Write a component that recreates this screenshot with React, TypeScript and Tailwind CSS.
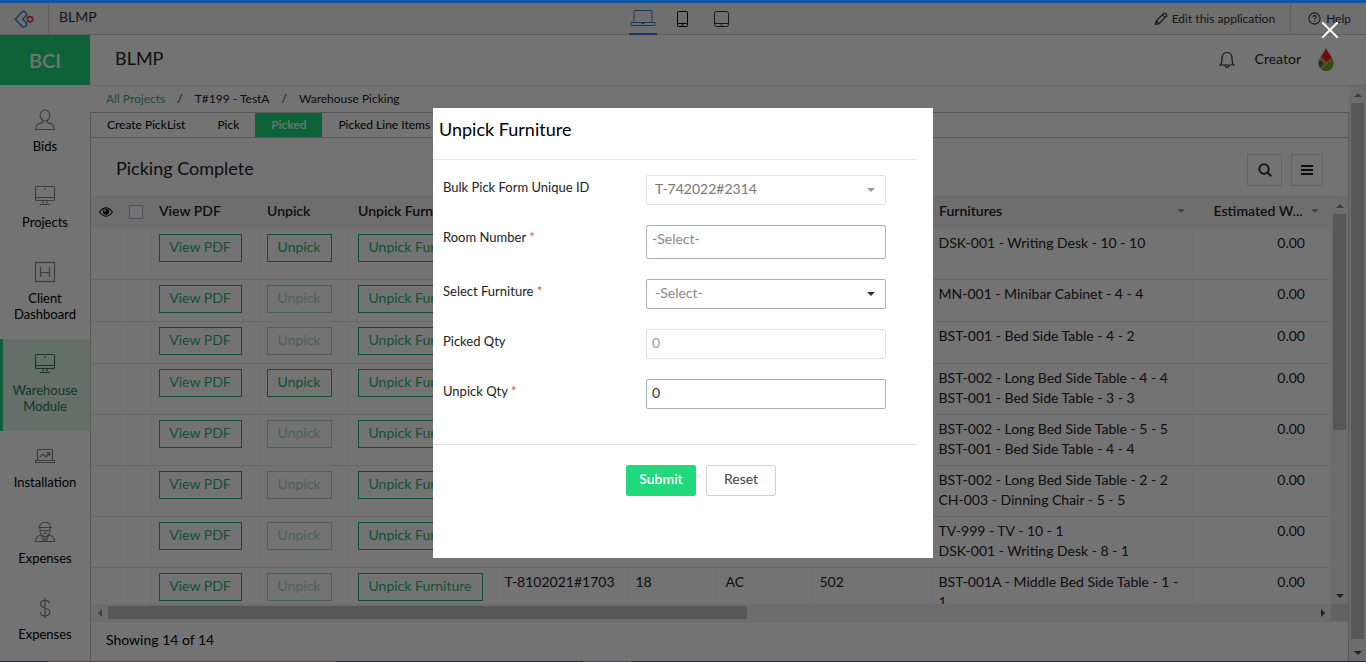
import type { ReactNode } from "react";

type NavItem = { label: string; icon: ReactNode; active?: boolean };

const Icon = ({ children }: { children: ReactNode }) => (
  <svg viewBox="0 0 22 22" className="h-[22px] w-[22px]" fill="none" stroke="currentColor" strokeWidth="1.2" aria-hidden="true">
    {children}
  </svg>
);

const Monitor = () => (
  <Icon>
    <rect x="1.5" y="1.5" width="19" height="14" rx="1" />
    <path d="M1.5 12.5h19M9 15.5v3M13 15.5v3M6 19.5h10M10 4h2" />
  </Icon>
);

const nav: NavItem[] = [
  {
    label: "Bids",
    icon: (
      <Icon>
        <ellipse cx="11" cy="6.5" rx="4.8" ry="5.5" />
        <path d="M8.5 11.5v2c-4 1.2-7 2-7 7h19c0-5-3-5.8-7-7v-2" />
      </Icon>
    ),
  },
  { label: "Projects", icon: <Monitor /> },
  {
    label: "Client Dashboard",
    icon: (
      <Icon>
        <rect x="1.5" y="1.5" width="19" height="19" />
        <path d="M6.500 6v10M15.500 6v10M6.500 11.500h9" />
      </Icon>
    ),
  },
  { label: "Warehouse Module", icon: <Monitor />, active: true },
  {
    label: "Installation",
    icon: (
      <Icon>
        <rect x="3.5" y="4.5" width="15" height="11" rx="1" />
        <path d="M1.500 15.500h19v2h-19zM6 12l3-3 3 3 3.500-4M12.500 7.800h3.200v3" />
      </Icon>
    ),
  },
  {
    label: "Expenses",
    icon: (
      <Icon>
        <path d="M5.500 6.500C5.500 3 8 1.500 11 1.500s5.500 1.500 5.500 5zM4 6.500h14M6 6.500v3c0 4 2 6 5 6s5-2 5-6v-3M6 9.500h4l1 1 1-1h4M9 12.500h4" />
        <path d="M7.500 14c-3.500.5-6 2-6 6.500h19c0-4.500-2.500-6-6-6.500M7.500 14l2 6M14.500 14l-2 6M11 16v4" />
      </Icon>
    ),
  },
  {
    label: "Expenses",
    icon: (
      <Icon>
        <path d="M15.500 6.500c0-2-2-3.200-4.500-3.200S6.500 4.600 6.500 7s2 3.200 4.500 4 4.800 1.600 4.800 4-2.200 3.800-4.800 3.800-4.800-1.400-4.800-3.600M11 1v20" />
      </Icon>
    ),
  },
];

type Row = { unpick: boolean; cells: string[]; furniture: string[]; height: string };

const blank = ["", "", "", ""];
const rows: Row[] = [
  { unpick: true, cells: blank, furniture: ["DSK-001 - Writing Desk - 10 - 10"], height: "h-[50px]" },
  { unpick: false, cells: blank, furniture: ["MN-001 - Minibar Cabinet - 4 - 4"], height: "h-[42px]" },
  { unpick: false, cells: blank, furniture: ["BST-001 - Bed Side Table - 4 - 2"], height: "h-[42px]" },
  { unpick: true, cells: blank, furniture: ["BST-002 - Long Bed Side Table - 4 - 4", "BST-001 - Bed Side Table - 3 - 3"], height: "h-[51px]" },
  { unpick: false, cells: blank, furniture: ["BST-002 - Long Bed Side Table - 5 - 5", "BST-001 - Bed Side Table - 4 - 4"], height: "h-[51px]" },
  { unpick: false, cells: blank, furniture: ["BST-002 - Long Bed Side Table - 2 - 2", "CH-003 - Dinning Chair - 5 - 5"], height: "h-[51px]" },
  { unpick: false, cells: blank, furniture: ["TV-999 - TV - 10 - 1", "DSK-001 - Writing Desk - 8 - 1"], height: "h-[51px]" },
  { unpick: false, cells: ["T-8102021#1703", "18", "AC", "502"], furniture: ["BST-001A - Middle Bed Side Table - 1 - 1"], height: "h-[51px]" },
];

const Arrow = ({ dir, className = "" }: { dir: "up" | "down" | "left" | "right"; className?: string }) => {
  const d = { up: "M0 6l4-4 4 4z", down: "M0 2l4 4 4-4z", left: "M6 0L2 4l4 4z", right: "M2 0l4 4-4 4z" }[dir];
  return (
    <svg viewBox="0 0 8 8" className={`h-2 w-2 shrink-0 ${className}`} fill="currentColor" aria-hidden="true">
      <path d={d} />
    </svg>
  );
};

const OutlineButton = ({ children, disabled }: { children: ReactNode; disabled?: boolean }) => (
  <button
    type="button"
    disabled={disabled}
    className={`block h-7 w-full whitespace-nowrap border pb-[2px] text-[14px] leading-5 ${disabled ? "border-[#a9dcc2] text-[#a9dcc2]" : "border-[#1fb46c] text-[#2ab56f]"}`}
  >
    {children}
  </button>
);

const TopBar = () => (
  <header className="flex h-8 shrink-0 items-stretch border-b border-[#cdcdcd] bg-[#f5f5f5] text-[#333]">
    <div className="flex flex-1 items-stretch">
      <div className="flex w-[49px] items-center justify-center border-r border-[#d3d3d3]">
        <svg viewBox="0 0 20 20" className="h-5 w-5" fill="none" aria-label="Creator">
          <path d="M1.300 10.300L8.300 2.800q1.200-1.200 2.400 0l1.700 1.700q1 1 0 2L8.600 10.300l3.800 3.800q1 1 0 2l-1.700 1.700q-1.200 1.200-2.400 0z" stroke="#2f7fd0" strokeWidth="1.4" />
          <circle cx="16" cy="10.300" r="2.600" stroke="#e04848" strokeWidth="1.700" />
        </svg>
      </div>
      <div className="flex items-center pb-1 pl-[10px] text-[14px]">BLMP</div>
    </div>
    <nav className="flex items-start gap-5 pr-2" aria-label="Device preview">
      <button type="button" aria-label="Desktop" className="flex h-8 w-7 items-center justify-center border-b-2 border-[#2a7fd4] text-[#3d83c9]">
        <svg viewBox="0 0 26 18" className="h-[18px] w-[26px]" fill="none" stroke="currentColor">
          <path d="M4 13V2.500q0-1 1-1h16q1 0 1 1V13M1 13.500h24v2q0 1-1 1H2q-1 0-1-1zM11.500 14.500h3" />
        </svg>
      </button>
      <button type="button" aria-label="Phone" className="flex h-8 w-3 items-center justify-center text-black">
        <svg viewBox="0 0 12 18" className="h-[18px] w-3" fill="none" stroke="currentColor">
          <rect x=".5" y="1.500" width="10" height="15" rx="1" />
          <path d="M1 13.500h9.500M4.500 15h2" />
        </svg>
      </button>
      <button type="button" aria-label="Tablet" className="ml-[5px] flex h-8 w-4 items-center justify-center text-[#333]">
        <svg viewBox="0 0 16 18" className="h-[18px] w-4" fill="none" stroke="currentColor">
          <rect x=".5" y="1.500" width="14" height="15" rx="2" />
          <path d="M1 13.500h13M6.500 15h2" />
        </svg>
      </button>
    </nav>
    <div className="flex flex-1 items-stretch justify-end text-[12px]">
      <a href="#edit" className="flex items-center gap-1 pr-[15px]">
        <svg viewBox="0 0 14 14" className="h-[14px] w-[14px]" fill="none" stroke="currentColor" aria-hidden="true">
          <path d="M1.500 12.500l.8-3.600L9.800 1.400q.8-.6 1.500 0l1.200 1.300q.6.700 0 1.400L5 11.600zM8.500 2.700l2.700 2.700M2.300 8.900L5 11.600" strokeWidth="1.200" />
        </svg>
        Edit this application
      </a>
      <a href="#help" className="flex items-center gap-[5px] border-l border-[#cdcdcd] pl-[17px] pr-[15px]">
        <svg viewBox="0 0 14 14" className="h-[13px] w-[13px]" fill="none" stroke="currentColor" strokeWidth="1.2" aria-hidden="true">
          <circle cx="7" cy="7" r="6" />
          <path d="M5.200 5.700q.1-1.800 1.900-1.800T8.900 5.600c0 1.200-1.800 1.200-1.800 2.600M7.100 9.300v1.200" />
        </svg>
        Help
      </a>
    </div>
  </header>
);

const Sidebar = () => (
  <aside className="flex w-[90px] shrink-0 flex-col">
    <div className="flex h-[50px] shrink-0 items-center justify-center bg-[#1fd97c] pb-px text-[20px] font-semibold text-white">BCI</div>
    <nav className="flex flex-col pt-[10px]">
      {nav.map((item, i) => (
        <a
          key={i}
          href={`#nav-${i}`}
          className={`flex flex-col items-center border-l-[3px] pb-[17px] pr-[3px] pt-[14px] text-center text-[13px] leading-4 ${item.active ? "border-[#1fd97c] bg-[#dff5e9] text-[#2c7a58]" : "border-transparent text-black"}`}
        >
          <span className={item.active ? "text-[#3a7a5e]" : "text-[#888]"}>{item.icon}</span>
          <span className="mt-[7px]">{item.label}</span>
        </a>
      ))}
    </nav>
  </aside>
);

const DataTable = () => (
  <table className="w-full min-w-[1238px] table-fixed border-collapse text-[14px] leading-5">
    <colgroup>
      <col className="w-[29px]" />
      <col className="w-[30px]" />
      <col className="w-[108px]" />
      <col className="w-[91px]" />
      <col className="w-[147px]" />
      <col className="w-[131px]" />
      <col className="w-[90px]" />
      <col className="w-[94px]" />
      <col className="w-[119px]" />
      <col />
      <col className="w-[137px]" />
    </colgroup>
    <thead>
      <tr className="h-8 bg-[#f4f4f4] text-left">
        <th aria-label="Show" className="pb-[2px]">
          <svg viewBox="0 0 14 10" className="ml-2 h-[10px] w-[14px]" aria-hidden="true">
            <path d="M.5 5Q7-3.500 13.500 5 7 13.500.500 5z" fill="none" stroke="#111" strokeWidth="1.2" />
            <circle cx="7" cy="4.600" r="3.200" fill="#111" />
            <circle cx="6" cy="3.600" r="1" fill="#fff" />
          </svg>
        </th>
        <th className="pb-[2px]">
          <input type="checkbox" aria-label="Select all" className="ml-[9px] block h-[14px] w-[14px] appearance-none border border-[#a8b3bf] bg-white" />
        </th>
        <th className="px-[9px] pb-1 font-semibold">View PDF</th>
        <th className="px-[9px] pb-1 font-semibold">Unpick</th>
        <th className="whitespace-nowrap px-[9px] pb-1 font-semibold">Unpick Furniture</th>
        <th /><th /><th /><th />
        <th className="px-[9px] pb-1 font-semibold">
          <span className="flex items-center justify-between">Furnitures<Arrow dir="down" className="text-[#999]" /></span>
        </th>
        <th className="pb-1 pl-5 pr-3 font-semibold">
          <span className="flex items-center justify-between">Estimated W...<Arrow dir="down" className="text-[#999]" /></span>
        </th>
      </tr>
    </thead>
    <tbody className="align-top text-[#222]">
      {rows.map((row, i) => (
        <tr key={i} className={`${row.height} border-b border-[#e4e4e4] [&>td]:border-r [&>td]:border-[#f6f6f6]`}>
          <td />
          <td />
          <td className="px-2 pt-[5px]"><div className="w-[83px]"><OutlineButton>View PDF</OutlineButton></div></td>
          <td className="px-2 pt-[5px]"><div className="w-[65px]"><OutlineButton disabled={!row.unpick}>Unpick</OutlineButton></div></td>
          <td className="px-2 pt-[5px]"><div className="w-[125px]"><OutlineButton>Unpick Furniture</OutlineButton></div></td>
          {row.cells.map((cell, j) => (
            <td key={j} className="whitespace-nowrap px-2 pt-1">{cell}</td>
          ))}
          <td className="px-2 pt-1">
            {row.furniture.map((line) => <div key={line}>{line}</div>)}
          </td>
          <td className="pr-[25px] pt-1 text-right">0.00</td>
        </tr>
      ))}
    </tbody>
  </table>
);

const VerticalScrollbar = ({ thumb, upClass }: { thumb: string; upClass: string }) => (
  <div className="flex w-[17px] shrink-0 flex-col items-center bg-[#f1f1f1]" aria-hidden="true">
    <span className="flex h-[17px] items-center"><Arrow dir="up" className={upClass} /></span>
    <span className="flex w-[13px] flex-1 flex-col"><span className={`${thumb} w-full bg-[#c1c1c1]`} /></span>
    <span className="flex h-[17px] items-center"><Arrow dir="down" className="text-[#444]" /></span>
  </div>
);

const tabs = ["Create PickList", "Pick", "Picked", "Picked Line Items"];

const Main = () => (
  <main className="flex min-w-0 flex-1 flex-col">
    <div className="flex h-[26px] shrink-0 items-center gap-3 pl-4 text-[12px]">
      <a href="#projects" className="text-[#3fa983]">All Projects</a>
      <span>/</span>
      <a href="#test">T#199 - TestA</a>
      <span>/</span>
      <span>Warehouse Picking</span>
    </div>
    <section className="flex min-h-0 flex-1 flex-col border-x border-t border-[#c4c4c4]">
      <nav className="flex h-[25px] shrink-0 border-b border-[#c4c4c4] text-[12px]">
        {tabs.map((tab) => (
          <a
            key={tab}
            href="#tab"
            className={`flex items-center px-4 ${tab === "Picked" ? "bg-[#1fd97c] font-semibold text-white" : "text-black"}`}
          >
            {tab}
          </a>
        ))}
      </nav>
      <div className="flex h-[59px] shrink-0 items-center justify-between border-b border-[#e6e6e6] pl-[25px] pr-[25px]">
        <h2 className="pt-[2px] text-[18px]">Picking Complete</h2>
        <div className="flex gap-[9px] pt-[5px]">
          <button type="button" aria-label="Search" className="flex h-8 w-[35px] items-center justify-center border border-[#dcdcdc]">
            <svg viewBox="0 0 14 14" className="h-[14px] w-[14px]" fill="none" stroke="#333" strokeWidth="2" aria-hidden="true">
              <circle cx="6" cy="6" r="4.700" /><path d="M9.500 9.500l3.700 3.700" />
            </svg>
          </button>
          <button type="button" aria-label="Menu" className="flex h-8 w-8 items-center justify-center border border-[#dcdcdc]">
            <svg viewBox="0 0 12 12" className="h-3 w-3" stroke="#222" strokeWidth="2" aria-hidden="true"><path d="M0 2h12M0 6h12M0 10h12" /></svg>
          </button>
        </div>
      </div>
      <div className="flex min-h-0 flex-1">
        <div className="min-w-0 flex-1 overflow-hidden"><DataTable /></div>
        <VerticalScrollbar thumb="h-[58%]" upClass="text-[#888]" />
      </div>
      <div className="flex h-[17px] shrink-0 bg-[#f1f1f1]" aria-hidden="true">
        <span className="flex w-[17px] items-center justify-center"><Arrow dir="left" className="text-[#888]" /></span>
        <span className="flex flex-1 items-center"><span className="h-[13px] w-[53%] bg-[#c1c1c1]" /></span>
        <span className="flex w-[17px] items-center justify-center"><Arrow dir="right" className="text-[#444]" /></span>
        <span className="w-[17px] bg-[#dcdcdc]" />
      </div>
      <footer className="flex h-10 shrink-0 items-center border-t border-[#eaeaea] pb-1 pl-[15px] text-[14px] text-black">Showing 14 of 14</footer>
    </section>
  </main>
);

const Label = ({ htmlFor, required, children }: { htmlFor: string; required?: boolean; children: ReactNode }) => (
  <label htmlFor={htmlFor} className="w-[203px] shrink-0 pt-[2px] text-[13px] leading-5 text-[#222]">
    {children}
    {required && <span className="text-[#f0483e]"> *</span>}
  </label>
);

const fieldBase = "h-[30px] w-full appearance-none rounded-xs border bg-white pb-1 text-[14px]";

const SelectField = ({ id, value, disabled }: { id: string; value: string; disabled?: boolean }) => (
  <div className="relative w-60">
    <select id={id} disabled={disabled} className={`${fieldBase} pl-2 opacity-100 ${disabled ? "border-[#e0e0e0] text-[#777]" : "border-[#a4b2c0] text-[#8a8a8a]"}`}>
      <option>{value}</option>
    </select>
    <Arrow dir="down" className={`pointer-events-none absolute right-[11px] top-[11px] ${disabled ? "text-[#999]" : "text-[#333]"}`} />
  </div>
);

const UnpickDialog = () => (
  <div className="fixed inset-0 bg-black/55">
    <button type="button" aria-label="Close" className="absolute right-7 top-[22px] text-white">
      <svg viewBox="0 0 16 16" className="h-4 w-4" fill="none" stroke="currentColor" strokeWidth="2"><path d="M0 0l16 16M16 0L0 16" /></svg>
    </button>
    <div role="dialog" aria-modal="true" aria-labelledby="dialog-title" className="mx-auto mt-[108px] h-[450px] w-[500px] bg-white pr-[17px]">
      <h2 id="dialog-title" className="flex h-[52px] items-center border-b border-[#e8e8e8] pb-2 pl-[6px] text-[18px] text-black">Unpick Furniture</h2>
      <form onSubmit={(e) => e.preventDefault()}>
        <div className="flex h-[285px] flex-col gap-5 border-b border-[#dedede] pl-[10px] pt-[15px]">
          <div className="flex"><Label htmlFor="form-id">Bulk Pick Form Unique ID</Label><SelectField id="form-id" value="T-742022#2314" disabled /></div>
          <div className="flex">
            <Label htmlFor="room" required>Room Number</Label>
            <input id="room" placeholder="-Select-" className="h-[34px] w-60 rounded-xs border border-[#a4b2c0] pb-2 pl-[5px] text-[14px] placeholder:text-[#8a8a8a]" />
          </div>
          <div className="flex"><Label htmlFor="furniture" required>Select Furniture</Label><SelectField id="furniture" value="-Select-" /></div>
          <div className="flex">
            <Label htmlFor="picked">Picked Qty</Label>
            <div className="w-60"><input id="picked" disabled defaultValue="0" className={`${fieldBase} border-[#e0e0e0] pl-[5px] text-[#999]`} /></div>
          </div>
          <div className="flex">
            <Label htmlFor="unpick" required>Unpick Qty</Label>
            <div className="w-60"><input id="unpick" defaultValue="0" className={`${fieldBase} border-[#a4b2c0] pl-[5px] text-[#333]`} /></div>
          </div>
        </div>
        <div className="flex gap-[10px] pl-[193px] pt-5">
          <button type="submit" className="h-[31px] w-[70px] rounded-xs bg-[#1fd97c] pb-1 text-[14px] font-semibold text-white">Submit</button>
          <button type="reset" className="h-[31px] w-[70px] rounded-xs border border-[#cfd2d8] pb-1 text-[14px] text-[#444]">Reset</button>
        </div>
      </form>
    </div>
  </div>
);

export default function App() {
  return (
    <div className="flex h-screen flex-col overflow-hidden bg-white font-['Lato',sans-serif] text-[#222]">
      <div className="z-10 h-[3px] shrink-0 bg-[#1455a3]" />
      <TopBar />
      <div className="flex min-h-0 flex-1">
        <Sidebar />
        <div className="flex min-w-0 flex-1 flex-col">
          <div className="flex h-[51px] shrink-0 items-center justify-between border-b border-[#e6e6e6] pl-[25px] pr-8">
            <h1 className="pb-1 text-[18px]">BLMP</h1>
            <div className="flex items-center text-[14px]">
              <svg viewBox="0 0 16 18" className="mr-5 h-[18px] w-4" fill="none" stroke="#333" strokeWidth="1.2" aria-label="Notifications">
                <path d="M1 14c1.800-1.300 2-3 2-6.500C3 3 5 1.500 8 1.500s5 1.500 5 6c0 3.500.2 5.200 2 6.500zM6 14.500c.2 2.500 3.800 2.500 4 0" />
              </svg>
              <span className="pb-1">Creator</span>
              <svg viewBox="0 0 16 24" className="ml-[17px] h-6 w-4" aria-label="Account">
                <clipPath id="drop"><path d="M8 0c1 4.500 7.500 9 7.500 15.500a7.500 7.500 0 0 1-15 0C.5 9 7 4.500 8 0z" /></clipPath>
                <g clipPath="url(#drop)">
                  <path d="M0 0h16v24H0z" fill="#e8a51d" />
                  <path d="M0 0h16v8l-7.500 6L3 8.500z" fill="#e0202f" />
                  <path d="M0 10l6 5.500L1.500 20H0z" fill="#2b63b8" />
                  <path d="M16 9.500v15H2L4 21z" fill="#5fae3a" />
                </g>
              </svg>
            </div>
          </div>
          <div className="flex min-h-0 flex-1">
            <Main />
            <VerticalScrollbar thumb="h-[99%]" upClass="text-[#888]" />
          </div>
        </div>
      </div>
      <div className="flex h-px shrink-0 bg-[#56617a]">
        <span className="ml-12 w-72 bg-[#b8a4a8]" />
        <span className="ml-[247px] w-12 bg-[#9aa4b4]" />
      </div>
      <UnpickDialog />
    </div>
  );
}
